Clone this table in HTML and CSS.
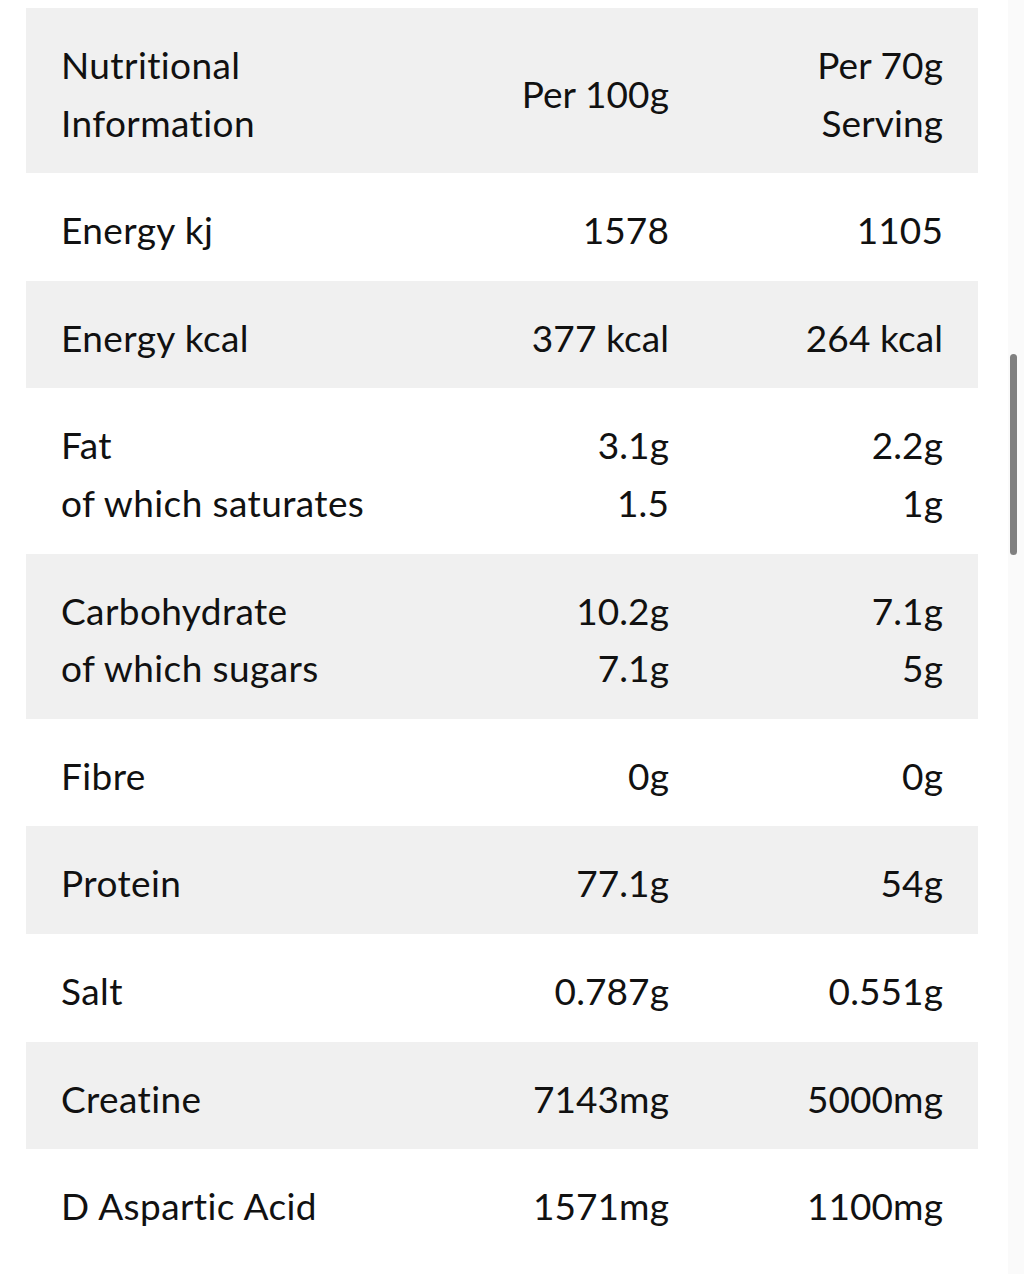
FILE: index.html
```html
<!DOCTYPE html>
<html lang="en">
<head>
<meta charset="utf-8">
<title>Nutritional Information</title>
<link rel="stylesheet" href="styles.css">
</head>
<body>
<div class="page">
  <div class="table">
    <div class="row shade">
      <div class="cell label">Nutritional<br>Information</div>
      <div class="cell num">Per 100g</div>
      <div class="cell num">Per 70g<br>Serving</div>
    </div>
    <div class="row">
      <div class="cell label">Energy kj</div>
      <div class="cell num">1578</div>
      <div class="cell num">1105</div>
    </div>
    <div class="row shade">
      <div class="cell label">Energy kcal</div>
      <div class="cell num">377 kcal</div>
      <div class="cell num">264 kcal</div>
    </div>
    <div class="row">
      <div class="cell label">Fat<br>of which saturates</div>
      <div class="cell num">3.1g<br>1.5</div>
      <div class="cell num">2.2g<br>1g</div>
    </div>
    <div class="row shade">
      <div class="cell label">Carbohydrate<br>of which sugars</div>
      <div class="cell num">10.2g<br>7.1g</div>
      <div class="cell num">7.1g<br>5g</div>
    </div>
    <div class="row">
      <div class="cell label">Fibre</div>
      <div class="cell num">0g</div>
      <div class="cell num">0g</div>
    </div>
    <div class="row shade">
      <div class="cell label">Protein</div>
      <div class="cell num">77.1g</div>
      <div class="cell num">54g</div>
    </div>
    <div class="row">
      <div class="cell label">Salt</div>
      <div class="cell num">0.787g</div>
      <div class="cell num">0.551g</div>
    </div>
    <div class="row shade">
      <div class="cell label">Creatine</div>
      <div class="cell num">7143mg</div>
      <div class="cell num">5000mg</div>
    </div>
    <div class="row">
      <div class="cell label">D Aspartic Acid</div>
      <div class="cell num">1571mg</div>
      <div class="cell num">1100mg</div>
    </div>
  </div>
</div>
<div class="scroll-track"><div class="scroll-thumb"></div></div>
</body>
</html>
```
FILE: styles.css
```css
html, body {
  margin: 0;
  padding: 0;
  background: #ffffff;
}
body {
  font-family: Lato, "Open Sans", sans-serif;
  color: #111111;
  overflow: hidden;
  height: 1274px;
}
.page {
  padding: 8px 0 0 26px;
}
.table {
  width: 952px;
}
.row {
  display: grid;
  grid-template-columns: 1fr 250px 274px;
  padding: 28px 35px 22px;
  font-size: 37px;
  line-height: 57.6px;
  font-variant-ligatures: none;
}
.label {
  letter-spacing: 0.4px;
}
.num {
  text-align: right;
  letter-spacing: 0.1px;
}
.shade {
  background: #f0f0f0;
}
.cell {
  align-self: center;
}
.scroll-track {
  position: fixed;
  top: 0;
  right: 0;
  width: 16px;
  height: 100%;
  background: #fafafa;
}
.scroll-thumb {
  position: absolute;
  top: 354px;
  left: 2px;
  width: 7px;
  height: 201px;
  border-radius: 4px;
  background: #808080;
}
```
